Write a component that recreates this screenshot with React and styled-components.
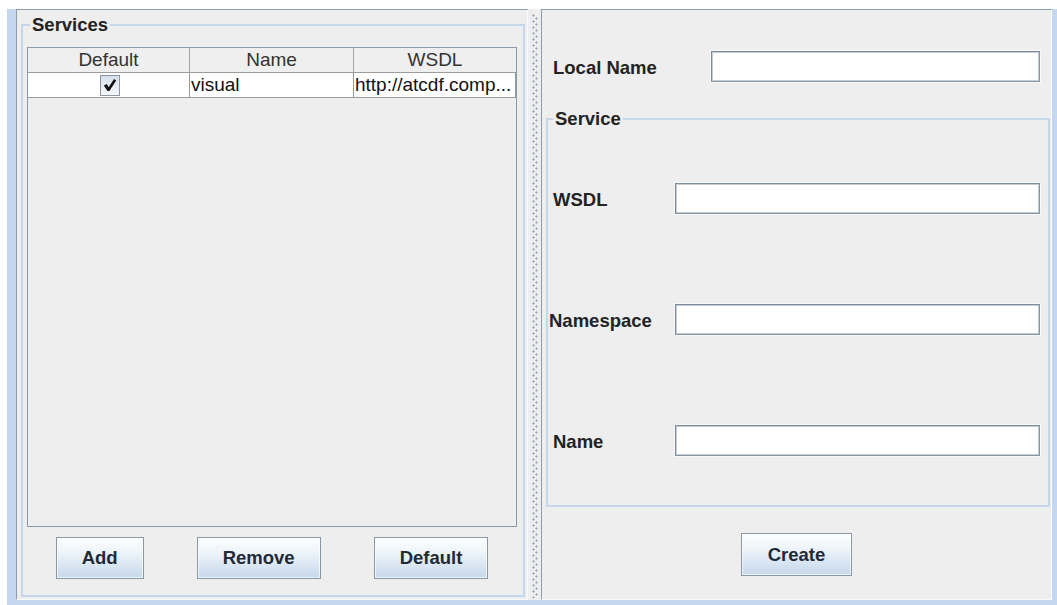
import React from 'react';
import styled, { createGlobalStyle } from 'styled-components';

const GlobalStyle = createGlobalStyle`
  html, body {
    margin: 0;
    padding: 0;
    background: #ffffff;
    overflow: hidden;
  }
  body {
    font-family: "Liberation Sans", Arial, sans-serif;
  }
  * { box-sizing: border-box; }
`;

/* window frame */
const Frame = styled.div`
  width: 1050px;
  height: 596px;
  margin: 9px 0 0 7px;
  padding: 0 5px 5px 9px;
  background: #c3d8ef;
  display: flex;
`;

const SplitPane = styled.div`
  flex: 1;
  display: flex;
  min-width: 0;
`;

const Panel = styled.div`
  width: ${p => p.$width}px;
  display: flex;
  flex-direction: column;
  background: #eeeeee;
  border-top: 1px solid #8e9bab;
  border-left: 1px solid #8e9bab;
  border-right: 1px solid #fafafa;
  border-bottom: 1px solid #fafafa;
`;

const Divider = styled.div`
  width: 13px;
  background: #eeeeee;
  display: flex;
  justify-content: center;
  padding: 5px 0 2px;
`;

/* split pane grip bumps */
const Grip = styled.div`
  width: 6px;
  background-image:
    radial-gradient(circle at 1.5px 1.5px, #9aa7b6 0.9px, transparent 1.3px),
    radial-gradient(circle at 4.5px 4.5px, #9aa7b6 0.9px, transparent 1.3px);
  background-size: 6px 6px;
  background-position: 0 0, 0 0;
`;

const Group = styled.fieldset`
  margin: ${p => p.$margin};
  padding: ${p => p.$padding};
  border: 2px solid #c6d7ea;
  min-width: 0;
  display: flex;
  flex-direction: column;
  flex: ${p => (p.$grow ? 1 : 'none')};
`;

const Legend = styled.legend`
  font-weight: bold;
  font-size: 18.5px;
  line-height: 22px;
  color: #232323;
  padding: 0 2px;
  margin-left: ${p => p.$offset}px;
`;

/* services table */
const TableBox = styled.div`
  flex: 1;
  display: flex;
  flex-direction: column;
  border: 1px solid #8c99a7;
  background: #eeeeee;
`;

const TableRow = styled.div`
  display: grid;
  grid-template-columns: 162px 164px 1fr;
  height: 25px;
`;

const HeadCell = styled.div`
  font-size: 19px;
  line-height: 24px;
  text-align: center;
  color: #333333;
  background: #efefef;
  border-bottom: 1px solid #9c9c9c;
  border-right: ${p => (p.$last ? 'none' : '1px solid #a4a4a4')};
`;

const Cell = styled.div`
  font-size: 19px;
  line-height: 24px;
  color: #111111;
  background: #ffffff;
  padding-left: 1px;
  white-space: nowrap;
  overflow: hidden;
  border-bottom: 1px solid #9a9a9a;
  border-right: 1px solid #9a9a9a;
  display: flex;
  align-items: center;
  justify-content: ${p => (p.$center ? 'center' : 'flex-start')};
`;

const CheckBox = styled.span`
  width: 20px;
  height: 21px;
  border: 1px solid #8b97a5;
  background: linear-gradient(180deg, #d6dfe9 0%, #eaeff4 60%, #f6f8fb 100%);
  display: inline-flex;
  align-items: center;
  justify-content: center;
  margin-left: 1px;
`;

const ButtonRow = styled.div`
  display: flex;
  justify-content: center;
  gap: 53px;
  margin-top: 10px;
`;

const Button = styled.button`
  height: ${p => p.$height || 42}px;
  padding: 0 ${p => p.$pad || 25}px;
  border: 1px solid #8a97a6;
  border-radius: 0;
  background: linear-gradient(180deg, #fdfeff 0%, #eef4fa 35%, #c6d8eb 100%);
  box-shadow: inset 0 0 0 1px rgba(255, 255, 255, 0.65);
  font-family: "Liberation Sans", Arial, sans-serif;
  font-weight: bold;
  font-size: 18.5px;
  color: #222a36;
  align-self: ${p => (p.$centered ? 'center' : 'auto')};
  margin-top: ${p => p.$top || 0}px;
`;

/* form side */
const LocalRow = styled.div`
  display: grid;
  grid-template-columns: 158px 1fr;
  align-items: center;
  margin-top: 41px;
  padding: 0 11px;
`;

const FormGrid = styled.div`
  display: grid;
  grid-template-columns: 126px 1fr;
  row-gap: 90px;
  align-items: center;
`;

const Label = styled.span`
  font-weight: bold;
  font-size: 18.5px;
  color: #232323;
  padding-left: ${p => p.$indent || 0}px;
  padding-top: 3px;
  white-space: nowrap;
`;

const Field = styled.input`
  height: 31px;
  width: 100%;
  border: 1px solid #8796a5;
  border-top-color: #7d8c9c;
  border-left-color: #7d8c9c;
  box-shadow: inset 0 0 0 1px #c5ccd4, 0 0 0 1px #f8f8f8;
  background: #ffffff;
  outline: none;
  padding: 0 4px;
  font-family: "Liberation Sans", Arial, sans-serif;
  font-size: 18px;
`;

function Check() {
  return (
    <svg width="14" height="14" viewBox="0 0 14 14" aria-hidden="true">
      <path d="M0.8 7.6 L4 6 L5.6 9.2 L11 1 L13.2 2.4 L6.4 12.9 L4.5 12.9 Z" fill="#121212" />
    </svg>
  );
}

const services = [
  { isDefault: true, name: 'visual', wsdl: 'http://atcdf.comp...' },
];

export default function App() {
  return (
    <>
      <GlobalStyle />
      <Frame>
        <SplitPane>
          <Panel $width={512}>
            <Group $grow $margin="4px 2px 2px 4px" $padding="11px 6px 16px 4px">
              <Legend $offset={3}>Services</Legend>
              <TableBox>
                <TableRow>
                  <HeadCell>Default</HeadCell>
                  <HeadCell>Name</HeadCell>
                  <HeadCell $last>WSDL</HeadCell>
                </TableRow>
                {services.map(s => (
                  <TableRow key={s.name}>
                    <Cell $center>
                      <CheckBox>{s.isDefault && <Check />}</CheckBox>
                    </Cell>
                    <Cell>{s.name}</Cell>
                    <Cell>{s.wsdl}</Cell>
                  </TableRow>
                ))}
              </TableBox>
              <ButtonRow>
                <Button>Add</Button>
                <Button>Remove</Button>
                <Button>Default</Button>
              </ButtonRow>
            </Group>
          </Panel>
          <Divider>
            <Grip />
          </Divider>
          <Panel $width={511}>
            <LocalRow>
              <Label>Local Name</Label>
              <Field />
            </LocalRow>
            <Group $margin="26px 1px 0 4px" $padding="53px 8px 49px 1px">
              <Legend $offset={4}>Service</Legend>
              <FormGrid>
                <Label $indent={4}>WSDL</Label>
                <Field />
                <Label>Namespace</Label>
                <Field />
                <Label $indent={4}>Name</Label>
                <Field />
              </FormGrid>
            </Group>
            <Button $centered $top={26} $height={43} $pad={26}>Create</Button>
          </Panel>
        </SplitPane>
      </Frame>
    </>
  );
}
